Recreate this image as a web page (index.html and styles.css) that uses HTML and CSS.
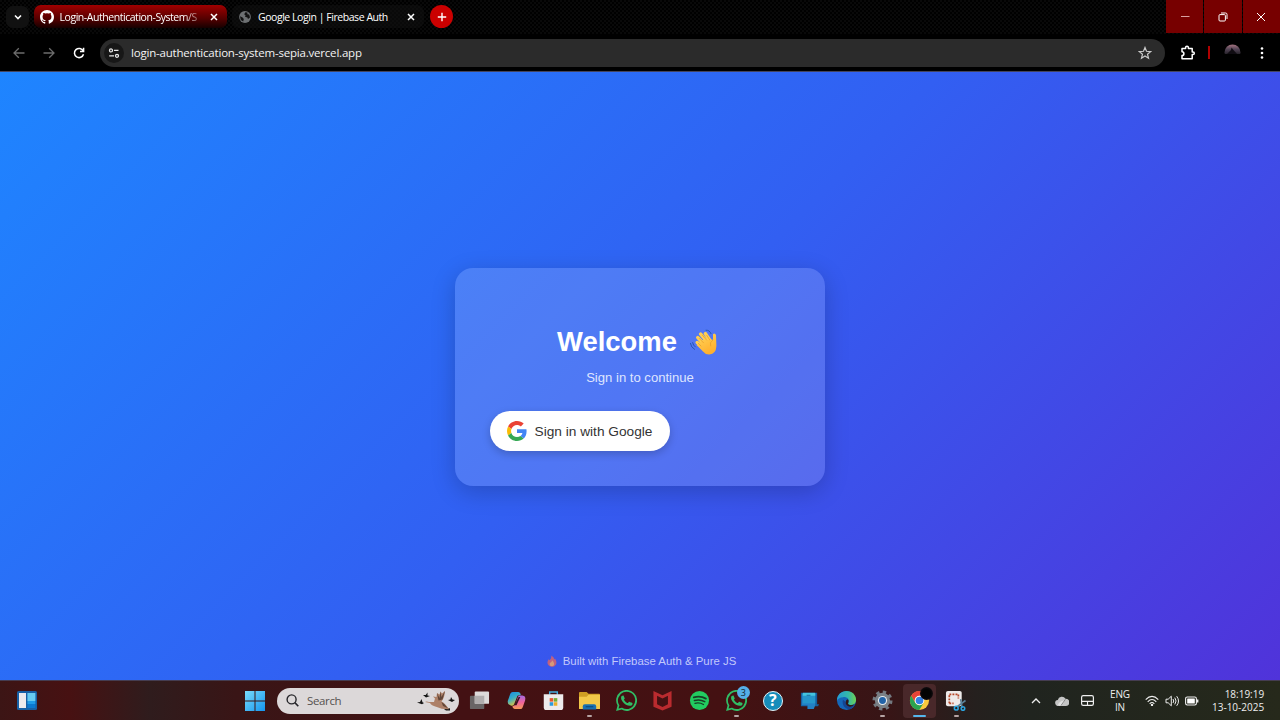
FILE: index.html
```html
<!DOCTYPE html>
<html lang="en">
<head>
<meta charset="utf-8">
<title>Google Login | Firebase Auth</title>
<link rel="stylesheet" href="styles.css">
</head>
<body>
<div class="desktop">
  <header class="tabstrip">
    <button class="tab-search" aria-label="Search tabs"><svg width="10" height="10" viewBox="0 0 10 10"><path d="M2 3.5 5 6.5 8 3.5" fill="none" stroke="#fff" stroke-width="1.6"/></svg></button>
    <div class="tab tab-red">
      <svg class="tab-icon" width="14" height="14" viewBox="0 0 16 16"><path fill="#fff" d="M8 0C3.58 0 0 3.58 0 8c0 3.54 2.29 6.53 5.47 7.59.4.07.55-.17.55-.38 0-.19-.01-.82-.01-1.49-2.01.37-2.53-.49-2.69-.94-.09-.23-.48-.94-.82-1.13-.28-.15-.68-.52-.01-.53.63-.01 1.08.58 1.23.82.72 1.21 1.87.87 2.33.66.07-.52.28-.87.51-1.07-1.78-.2-3.64-.89-3.64-3.95 0-.87.31-1.59.82-2.15-.08-.2-.36-1.02.08-2.12 0 0 .67-.21 2.2.82a7.4 7.4 0 0 1 4 0c1.53-1.04 2.2-.82 2.2-.82.44 1.1.16 1.92.08 2.12.51.56.82 1.27.82 2.15 0 3.07-1.87 3.75-3.65 3.95.29.25.54.73.54 1.48 0 1.07-.01 1.93-.01 2.2 0 .21.15.46.55.38A8 8 0 0 0 16 8c0-4.42-3.58-8-8-8z"/></svg>
      <span class="tab-title fade">Login-Authentication-System/S</span>
      <svg class="tab-close" width="8" height="8" viewBox="0 0 8 8"><path d="M1 1 7 7M7 1 1 7" stroke="#fff" stroke-width="1.5"/></svg>
    </div>
    <div class="tab tab-dark">
      <svg class="tab-icon" width="12" height="12" viewBox="0 0 12 12"><circle cx="6" cy="6" r="5.9" fill="#6d7072"/><path d="M1 5.2 3.6 6.6 4.8 8 4.2 10.4 1.8 9ZM6.4 1.2 5.2 3.2 6.6 4.4 6 5.8 8.4 6.4 9 8 11 6.6 10.2 3.4 8.4 3.2 8.4 1.6Z" fill="#111"/></svg>
      <span class="tab-title">Google Login | Firebase Auth</span>
      <svg class="tab-close" width="8" height="8" viewBox="0 0 8 8"><path d="M1 1 7 7M7 1 1 7" stroke="#fff" stroke-width="1.5"/></svg>
    </div>
    <button class="new-tab" aria-label="New tab"><svg width="10" height="10" viewBox="0 0 10 10"><path d="M5 .8V9.2M.8 5H9.2" stroke="#fff" stroke-width="1.4"/></svg></button>
    <div class="window-buttons">
      <span class="wb"><svg width="10" height="10" viewBox="0 0 10 10"><path d="M1 4.5H9.5" stroke="#d9a0a0" stroke-width="1"/></svg></span>
      <span class="wb"><svg width="10" height="10" viewBox="0 0 10 10"><rect x="1" y="2.6" width="6.4" height="6.4" rx="1" fill="none" stroke="#fff"/><path d="M3 1H7.6Q9 1 9 2.4V7" fill="none" stroke="#fff"/></svg></span>
      <span class="wb"><svg width="10" height="10" viewBox="0 0 10 10"><path d="M1 1 9 9M9 1 1 9" stroke="#fff" stroke-width="1"/></svg></span>
    </div>
  </header>
  <div class="toolbar">
    <svg class="nav" width="12" height="12" viewBox="0 0 12 12"><path d="M11.5 6H1M5.8 1.2 1 6 5.8 10.8" fill="none" stroke="#6c6c6c" stroke-width="1.3"/></svg>
    <svg class="nav" width="12" height="12" viewBox="0 0 12 12"><path d="M.5 6H11M6.2 1.2 11 6 6.2 10.8" fill="none" stroke="#6c6c6c" stroke-width="1.3"/></svg>
    <svg class="nav" width="12" height="12" viewBox="0 0 12 12"><path d="M10.2 4A4.6 4.6 0 1 0 10.5 7.2M10.6 .8V4.4H7" fill="none" stroke="#fff" stroke-width="1.5"/></svg>
    <div class="omnibox">
      <span class="site-info"><svg width="12" height="12" viewBox="0 0 12 12"><g fill="none" stroke="#e8e8e8" stroke-width="1.3"><circle cx="3" cy="3.4" r="1.5"/><path d="M6 3.4H10.5M1.2 8.8H6"/><circle cx="9" cy="8.8" r="1.5"/></g></svg></span>
      <span class="url">login-authentication-system-sepia.vercel.app</span>
      <svg class="star" width="14" height="14" viewBox="0 0 14 14"><path d="M7 1.5 8.5 5.3 12.6 5.6 9.5 8.2 10.5 12.2 7 10 3.5 12.2 4.5 8.2 1.4 5.6 5.5 5.3Z" fill="none" stroke="#c9c9c9" stroke-width="1.2"/></svg>
    </div>
    <svg class="ext" width="16" height="16" viewBox="0 0 16 16"><path d="M2 3.4H5.6V2.6A1.4 1.4 0 0 1 8.4 2.6V3.4H12.2V7H13A1.3 1.3 0 0 1 13 9.6H12.2V13.8H2V10.6A1.9 1.9 0 0 0 2 6.8Z" fill="none" stroke="#fff" stroke-width="1.5" stroke-linejoin="round"/></svg>
    <span class="divider"></span>
    <svg class="profile" width="17" height="17" viewBox="0 0 17 17"><defs><linearGradient id="pf" x2="0" y2="1"><stop offset="0" stop-color="#a57480"/><stop offset=".3" stop-color="#514354"/><stop offset=".58" stop-color="#29242c"/><stop offset=".62" stop-color="#000"/></linearGradient></defs><circle cx="8.5" cy="8.5" r="8" fill="url(#pf)"/><path d="M3 10 7 6 7.6 3.6 9 5.4 13 10Z" fill="#100c12"/></svg>
    <svg class="dots" width="4" height="14" viewBox="0 0 4 14"><g fill="#fff"><circle cx="2" cy="2.5" r="1.3"/><circle cx="2" cy="7" r="1.3"/><circle cx="2" cy="11.5" r="1.3"/></g></svg>
  </div>

  <main class="page">
    <section class="card">
      <h1 class="title">Welcome
        <svg class="wave" width="28" height="28" viewBox="0 0 28 28"><defs><linearGradient id="hand" x2=".5" y2="1"><stop offset="0" stop-color="#ffd75c"/><stop offset="1" stop-color="#ffb02e"/></linearGradient></defs><g fill="none" stroke="#2458b4" stroke-width="1" stroke-linecap="round"><path d="M1.4 15.4Q2 19.6 5.6 21.4M3.6 14.6Q4 17.4 6.4 19M17 2.2Q20.5 1.8 22 5.6"/></g><g stroke-width="3.5" stroke-linecap="round" stroke="#ffcf51"><path d="M8.2 14.5 15 20.5M8.8 9.6 16 17M11.6 6 19 15M16.4 5.6 22 14"/></g><path d="M9 16 14 12 21 11.5 24 11.7Q24 8.6 24 6.2 25.8 4.4 27 7L27.4 18Q27 26 20.4 26.4 16.4 26.6 14 23.4L7.6 17Z" fill="url(#hand)"/><path d="M10.2 10.4 14.5 14.8M13.4 7.2 17.5 12M17.8 7.4 20.8 12M9.2 15.2 12 18M23.8 12Q20 14.6 21.6 18" fill="none" stroke="#e59a2a" stroke-width=".7" stroke-linecap="round"/></svg>
      </h1>
      <p class="sub">Sign in to continue</p>
      <button class="google"><svg width="20" height="20" viewBox="0 0 48 48"><path fill="#EA4335" d="M24 9.5c3.54 0 6.71 1.22 9.21 3.6l6.85-6.85C35.9 2.38 30.47 0 24 0 14.62 0 6.51 5.38 2.56 13.22l7.98 6.19C12.43 13.72 17.74 9.5 24 9.5z"/><path fill="#4285F4" d="M46.98 24.55c0-1.57-.15-3.09-.38-4.55H24v9.02h12.94c-.58 2.96-2.26 5.48-4.78 7.18l7.73 6c4.51-4.18 7.09-10.36 7.09-17.65z"/><path fill="#FBBC05" d="M10.53 28.59c-.48-1.45-.76-2.99-.76-4.59s.27-3.14.76-4.59l-7.98-6.19C.92 16.46 0 20.12 0 24c0 3.88.92 7.54 2.56 10.78l7.97-6.19z"/><path fill="#34A853" d="M24 48c6.48 0 11.93-2.13 15.89-5.81l-7.73-6c-2.15 1.45-4.92 2.3-8.16 2.3-6.26 0-11.57-4.22-13.47-9.91l-7.98 6.19C6.51 42.62 14.62 48 24 48z"/></svg><span>Sign in with Google</span></button>
    </section>
    <footer class="credit"><svg width="10" height="12" viewBox="0 0 10 12"><path d="M4.2.6Q7.2 2 7.3 4.4L8.1 3.5Q10.6 8 8.4 10.3 7 12 4.8 11.8 1.4 11.6.6 8.6 0 6.4 1.7 4.2L2.7 5.2Q4.8 3.2 4.2.6Z" fill="#c0617f"/><path d="M5 5.2Q8 8 6.9 10.3 5 12 3 10.4 2 8.4 3.6 7.6 5 6.8 5 5.2Z" fill="#d69a79"/></svg><span>Built with Firebase Auth &amp; Pure JS</span></footer>
  </main>

  <nav class="taskbar">
    <svg class="widgets" width="20" height="20" viewBox="0 0 20 20"><rect width="20" height="19" rx="1.5" fill="#1760a5"/><rect x="2" y="2" width="7" height="15" fill="#eceaed"/><rect x="10.4" y="2" width="8" height="8" fill="#66cbf1"/><rect x="10.4" y="10" width="8" height="3" fill="#1e9ae8"/><rect x="10.4" y="13" width="8" height="4" fill="#0b78d0"/></svg>
    <svg class="start" width="20" height="20" viewBox="0 0 20 20"><defs><linearGradient id="win" x2="1" y2="1"><stop offset="0" stop-color="#79dbfb"/><stop offset="1" stop-color="#1495ee"/></linearGradient></defs><path d="M0 0H9.5V9.5H0ZM10.5 0H20V9.5H10.5ZM0 10.5H9.5V20H0ZM10.5 10.5H20V20H10.5Z" fill="url(#win)"/></svg>
    <div class="search">
      <svg width="13" height="13" viewBox="0 0 13 13"><circle cx="5.6" cy="5.4" r="4.5" fill="none" stroke="#26262a" stroke-width="1.4"/><path d="M8.8 8.6 12.3 12.2" stroke="#26262a" stroke-width="1.6"/></svg>
      <span>Search</span>
      <svg class="birds" width="40" height="22" viewBox="0 0 40 22"><g fill="#151515"><path d="M1 12.5 4 12 5.5 9 6.5 12.3 8 13 6 14.3Z"/><path d="M7 5 9.7 5.1 11.5 2.5 11.5 5.4 14 6 10 7.4Z"/><path d="M32 10 34.4 9.6 35 7 36.5 9.6 39 10 36 12Z"/><path d="M28 19 34 18.3 34 20.4 30 20.6Z"/></g><path d="M9 12Q10.5 10.8 13 12L18 12 19 8.5 17 6.4 20.5 7 21 3 23.5 4.6 24.5 1.5 26 3.5 29 1Q28.6 8 25.5 11.4 29 13 33 19.2 26 19.4 20 16.7 15.4 15.5 14 13Z" fill="#ad8068"/><path d="M21 3 23.5 8 24.5 1.5 25.4 7 29 1 26.5 9.5 22.5 10.5ZM25.5 12Q28.6 13.6 32 18.3L27 16Z" fill="#614638"/></svg>
    </div>
    <div class="apps">
      <span class="app"><svg viewBox="0 0 22 22"><rect x="1" y="6" width="15" height="14" rx="1" fill="#696566"/><rect x="6" y="1.5" width="15" height="13" rx="1" fill="#dddada"/><path d="M6 6H16V14.5H6Z" fill="#b0adae"/></svg></span>
      <span class="app"><svg viewBox="0 0 22 22"><defs><linearGradient id="c1" x2=".5" y2="1"><stop offset="0" stop-color="#1686e5"/><stop offset=".5" stop-color="#37adc6"/><stop offset="1" stop-color="#e7c63a"/></linearGradient><linearGradient id="c2" x2="0" y2="1"><stop offset="0" stop-color="#a46be1"/><stop offset=".5" stop-color="#ef629b"/><stop offset="1" stop-color="#f59b56"/></linearGradient></defs><path d="M7 2H13Q15 2 15.6 5L12 6 8.5 15Q7.8 17 5 16.2 1 15 2 11L4.5 4Q5.2 2 7 2Z" fill="url(#c1)"/><path d="M14 5.8H17Q21.2 6 20 11L17.5 18Q16.8 20 15 20H9Q7 20 6.7 17 9 17 10 14.4L12.4 7.5Q13 5.9 14 5.8Z" fill="url(#c2)"/><path d="M13.2 7.3H15L11 16H8.6Z" fill="#3a1420"/></svg></span>
      <span class="app"><svg viewBox="0 0 22 22"><path d="M7 5V2H15V5" fill="none" stroke="#46aee0" stroke-width="1.5"/><path d="M.8 4.5H21.2V18Q21.2 21 18.5 21H3.5Q.8 21 .8 18Z" fill="#edebec"/><rect x="7" y="8.5" width="3.7" height="3.7" fill="#e65730"/><rect x="11.3" y="8.5" width="3.7" height="3.7" fill="#74ad35"/><rect x="7" y="12.8" width="3.7" height="3.7" fill="#2b9bdc"/><rect x="11.3" y="12.8" width="3.7" height="3.7" fill="#eab02b"/></svg></span>
      <span class="app"><svg viewBox="0 0 22 22"><path d="M0 3Q0 2 1 2H8L10 4H21Q22 4 22 5V19Q22 20 21 20H1Q0 20 0 19Z" fill="#cf9e23"/><path d="M0 7 8 7 10 5H22V19Q22 20 21 20H1Q0 20 0 19Z" fill="#f2c849"/><path d="M4 20.5V17Q4 15 6 15H16Q18 15 18 17V20.5Z" fill="#176fb1"/><path d="M7 17.5H15" stroke="#0c4c83" stroke-width="1.4"/></svg><i class="run"></i></span>
      <span class="app"><svg viewBox="0 0 24 24"><path fill="#31bd65" d="M17.47 14.38c-.3-.15-1.76-.87-2.03-.97-.28-.1-.47-.15-.67.15-.2.3-.77.97-.94 1.16-.17.2-.35.23-.65.08-.3-.15-1.25-.46-2.39-1.48a9 9 0 0 1-1.65-2.06c-.17-.3 0-.46.13-.61.6-.6.9-.9.5-1.5L8.85 6.9c-.24-.58-.49-.5-.67-.51-1.2 0-2.4.8-2.4 2.73 0 1.76 1.28 3.46 1.46 3.7 3 4.8 8.8 6.2 10.9 4.5.7-.6.9-1.6.7-2.3-.1-.2-.8-.4-1.37-.64zM12.05 21.8a9.87 9.87 0 0 1-5.03-1.38l-.36-.21-3.74.98 1-3.65-.24-.37A9.89 9.89 0 1 1 12.05 21.8zM20.52 3.45A11.9 11.9 0 0 0 1.8 17.84L.1 24l6.31-1.65A11.9 11.9 0 0 0 20.52 3.45z"/></svg></span>
      <span class="app"><svg viewBox="0 0 22 22"><path d="M1.5 1 11 5.5 20.5 1V17.5L11 21.5 1.5 17.5ZM5.3 6V15L11 17.7 16.7 15V6L11 8.8Z" fill="#ba2b2f" fill-rule="evenodd"/></svg></span>
      <span class="app"><svg viewBox="0 0 22 22"><circle cx="11" cy="11" r="10" fill="#22cc60"/><g fill="none" stroke="#183f25" stroke-linecap="round"><path d="M5 7.8Q11.8 5.8 17.7 9" stroke-width="1.9"/><path d="M5.7 11Q11.5 9.3 16.5 12.2" stroke-width="1.6"/><path d="M6.2 14Q11 12.8 15.2 15.2" stroke-width="1.3"/></g></svg></span>
      <span class="app"><svg viewBox="0 0 24 24"><path fill="#31bd65" d="M17.47 14.38c-.3-.15-1.76-.87-2.03-.97-.28-.1-.47-.15-.67.15-.2.3-.77.97-.94 1.16-.17.2-.35.23-.65.08-.3-.15-1.25-.46-2.39-1.48a9 9 0 0 1-1.65-2.06c-.17-.3 0-.46.13-.61.6-.6.9-.9.5-1.5L8.85 6.9c-.24-.58-.49-.5-.67-.51-1.2 0-2.4.8-2.4 2.73 0 1.76 1.28 3.46 1.46 3.7 3 4.8 8.8 6.2 10.9 4.5.7-.6.9-1.6.7-2.3-.1-.2-.8-.4-1.37-.64zM12.05 21.8a9.87 9.87 0 0 1-5.03-1.38l-.36-.21-3.74.98 1-3.65-.24-.37A9.89 9.89 0 1 1 12.05 21.8zM20.52 3.45A11.9 11.9 0 0 0 1.8 17.84L.1 24l6.31-1.65A11.9 11.9 0 0 0 20.52 3.45z"/></svg><b class="badge">3</b><i class="run"></i></span>
      <span class="app"><span class="help">?</span></span>
      <span class="app"><svg viewBox="0 0 22 22"><path d="M2 3H19V15H21L20 17H15V20H9V17H2Z" fill="#155f9f"/><path d="M3 4H17V16L15.5 20H9V16H3Z" fill="#2380c5"/><rect x="4" y="3" width="13" height="11" fill="#2596cb"/><path d="M4 3H17V6H4Z" fill="#44c4de"/><path d="M8 5.5H12" stroke="#176a9c"/></svg></span>
      <span class="app"><svg viewBox="0 0 22 22"><defs><linearGradient id="e1" x2="1" y2="0"><stop offset="0" stop-color="#259cd5"/><stop offset=".6" stop-color="#35b9a6"/><stop offset="1" stop-color="#70d251"/></linearGradient></defs><circle cx="11" cy="11" r="10" fill="#1566b8"/><path d="M1 11C1 4.8 5.8 1 11 1 17 1 21 5.2 21 10.2 21 14 18.3 15.8 15.6 15.8 13 15.8 12 14.4 13 13 14.6 9.5 11 7 7.4 7.5 4 7.7 1.6 9.3 1 11Z" fill="url(#e1)"/><path d="M7.3 10.2C5.7 15.6 9.6 20.4 14.8 20.2 17 19.3 18.8 17.8 19.8 15.8 14 18.6 9.7 15.5 9.7 12Z" fill="#154592"/><path d="M13 13Q12 14.4 13.2 15.2 16.4 16.5 19.8 15 17 18 13.7 17.3 9.8 16 10.1 12.5 10.5 10.2 12.4 9.8 13.8 11.3 13 13Z" fill="#301819"/></svg></span>
      <span class="app"><svg viewBox="0 0 22 22"><circle cx="11" cy="11" r="8.5" fill="none" stroke="#737980" stroke-width="4" stroke-dasharray="3.35 3.33"/><circle cx="11" cy="11" r="8" fill="#7b8187"/><circle cx="11" cy="11" r="4.8" fill="#e7edf2"/><circle cx="11" cy="11" r="3.6" fill="#2163a8"/></svg><i class="run"></i></span>
      <span class="app active"><svg viewBox="0 0 22 22"><circle cx="11" cy="11" r="10" fill="#fbc83c"/><path d="M2.3 6A10 10 0 0 1 19.7 6H11A5 5 0 0 0 6.7 13.5Z" fill="#e64338"/><path d="M2.3 6A10 10 0 0 0 10.8 21L15.3 13.5A5 5 0 0 1 6.7 13.5Z" fill="#2ba451"/><circle cx="11" cy="11" r="5" fill="#fff"/><circle cx="11" cy="11" r="4" fill="#3480e3"/></svg><b class="avatar"></b><i class="run run-active"></i></span>
      <span class="app"><svg viewBox="0 0 22 22"><rect x="1" y="1" width="16.5" height="16" rx="2" fill="#eeeaea"/><path d="M4.5 14V4.5H14V9M4.5 14H9" fill="none" stroke="#b8482a" stroke-width="1.8" stroke-dasharray="2 1.2"/><path d="M21.5 11 12.4 17.6M16.4 9.5 18 19" stroke="#5b8298" stroke-width="1.7"/><circle cx="11.8" cy="19" r="2" fill="none" stroke="#2ba4df" stroke-width="1.6"/><circle cx="18.8" cy="19.4" r="1.9" fill="none" stroke="#2ba4df" stroke-width="1.6"/></svg><i class="run"></i></span>
    </div>
    <div class="tray">
      <svg class="chev" width="10" height="8" viewBox="0 0 10 8"><path d="M1 6 5 2 9 6" fill="none" stroke="#eee" stroke-width="1.3"/></svg>
      <svg class="cloud" width="14" height="10" viewBox="0 0 14 10"><path d="M3.5 10A3 3 0 0 1 2.8 4 4.2 4.2 0 0 1 10.5 2.8 3.6 3.6 0 0 1 11 10Z" fill="#c5c5c5"/><path d="M3 9Q4 5 9 4.5 9 8 5 10Z" fill="#e3e3e3"/><path d="M6 9.5 10.4 3.3" stroke="#888" stroke-width="1"/></svg>
      <svg class="pad" width="13" height="11" viewBox="0 0 13 11"><rect x=".6" y=".6" width="11.8" height="9.8" rx="1.6" fill="none" stroke="#eee" stroke-width="1.2"/><path d="M.6 6.4H12.4M6.5 6.4V10.4" stroke="#eee" stroke-width="1.1"/></svg>
      <div class="lang"><span>ENG</span><span>IN</span></div>
      <svg class="wifi" width="14" height="12" viewBox="0 0 14 12"><g fill="none" stroke="#eee" stroke-width="1.1"><path d="M.7 4.6Q7-1.8 13.3 4.6M2.7 6.8Q7 2.2 11.3 6.8M4.7 8.8Q7 6.2 9.3 8.8"/></g><circle cx="7" cy="9.9" r="1.2" fill="#eee"/></svg>
      <svg class="sound" width="15" height="12" viewBox="0 0 15 12"><path d="M1 4.2H3.2L6.3 1.2V10.8L3.2 7.8H1Z" fill="none" stroke="#eee"/><path d="M8 4Q9.5 6 8 8M9.8 2.6Q12.3 6 9.8 9.4M11.7 1.2Q15.3 6 11.7 10.8" fill="none" stroke="#eee"/></svg>
      <svg class="battery" width="14" height="10" viewBox="0 0 14 10"><rect x=".6" y="1" width="10.8" height="8" rx="1.7" fill="none" stroke="#eee" stroke-width="1.1"/><rect x="2.2" y="2.6" width="7.6" height="4.8" rx=".5" fill="#fff"/><path d="M12.6 3.5V6.5" stroke="#eee" stroke-width="1.6"/></svg>
      <div class="clock"><span>18:19:19</span><span>13-10-2025</span></div>
    </div>
  </nav>
</div>
</body>
</html>
```
FILE: styles.css
```css
* { box-sizing: border-box; }
body { margin: 0; font-family: "Open Sans", "Noto Sans", sans-serif; }
button { border: 0; padding: 0; font: inherit; }
svg { display: block; flex: none; }
.desktop { width: 1280px; height: 720px; display: grid; grid-template-columns: 1280px; grid-template-rows: 34px 38px 608px 40px; overflow: hidden; }

.tabstrip { display: flex; align-items: center; padding-left: 6px; padding-bottom: 1px; background: repeating-conic-gradient(#000 0 25%, #090909 0 50%) 0 0 / 4px 4px; }
.tab-search { width: 23px; height: 22px; border-radius: 7px; background: #111; display: grid; place-items: center; }
.tab { display: flex; align-items: center; height: 23px; border-radius: 7px; color: #fff; font-size: 10.5px; }
.tab-red { width: 193px; margin-left: 4.5px; padding: 0 9px 0 6px; background: linear-gradient(#a00000, #540000 60%, #160000); }
.tab-dark { width: 192px; margin-left: 5.5px; padding: 0 9px 0 7px; background: rgba(18, 18, 18, .5); }
.tab-title { flex: 1; margin: 0 10px 0 6px; white-space: nowrap; letter-spacing: -.45px; }
.tab-dark .tab-title { margin-left: 7px; }
.fade { -webkit-mask-image: linear-gradient(90deg, #000 88%, transparent 104%); mask-image: linear-gradient(90deg, #000 88%, transparent 104%); }
.new-tab { width: 23px; height: 23px; margin-left: 6px; border-radius: 50%; background: #cb0000; display: grid; place-items: center; }
.window-buttons { display: flex; gap: 1px; margin-left: auto; align-self: stretch; }
.wb { width: 37.4px; height: 33px; background: #770000; display: grid; place-items: center; }

.toolbar { display: flex; align-items: center; padding: 0 16px 0 13px; background: #000; border-bottom: 1px solid #44455e; }
.nav { margin-right: 18px; }
.nav:nth-child(3) { margin-right: 15px; }
.omnibox { flex: none; width: 1065px; height: 28px; border-radius: 14px; background: #2b2b2b; display: flex; align-items: center; padding: 0 13px 0 4px; color: #f3f3f3; }
.site-info { width: 20px; height: 20px; border-radius: 50%; background: #171717; display: grid; place-items: center; }
.url { flex: 1; margin-left: 7px; font-size: 11.5px; letter-spacing: -.2px; }
.ext { margin-left: 15px; }
.divider { flex: none; width: 2px; height: 13px; margin-left: 12px; background: #b00000; }
.profile { margin-left: 14px; }
.dots { margin-left: 19px; }

.page { display: grid; grid-template-rows: 196px auto 1fr; justify-items: center; background: linear-gradient(135deg, #1e85ff, #325ff2 50%, #5033da); font-family: "Liberation Sans", Arial, sans-serif; }
.card { grid-row: 2; width: 370px; height: 218px; padding: 57px 34.5px 34px; border-radius: 18px; background: rgba(255, 255, 255, .15); box-shadow: 0 6px 24px rgba(0, 0, 0, .2); color: #fff; }
.title { display: flex; align-items: center; justify-content: center; gap: 12px; margin: 0; font-size: 27.4px; line-height: 34px; padding-right: 6px; }
.sub { margin: 10px 0 0; font-size: 13.1px; line-height: 18px; text-align: center; color: #dfe5ff; }
.google { display: flex; align-items: center; width: 180px; height: 40px; margin-top: 24px; padding-left: 17px; gap: 8px; border-radius: 20px; background: #fff; color: #333; font-size: 13.7px; white-space: nowrap; box-shadow: 0 3px 8px rgba(0, 0, 0, .2); }
.credit { grid-row: 3; align-self: end; display: flex; align-items: center; gap: 6px; margin-bottom: 12px; padding-left: 3px; font-size: 11.4px; line-height: 14px; color: #c2c8fb; }

.taskbar { display: flex; align-items: center; border-top: 1px solid #453d51; background: linear-gradient(90deg, #3c1515, #471112 70px, #2f1c1d 150px, #391516 235px, #431113 460px, #441112 730px, #371516 890px, #25201e 975px, #20241f 1030px, #26291b); }
.widgets { margin-left: 17px; }
.start { margin-left: 208px; }
.search { display: flex; align-items: center; width: 182px; height: 26px; margin-left: 12px; padding: 0 3px 0 9px; border-radius: 13px; background: #dcd8d9; font-size: 11.5px; color: #55504f; }
.search span { margin-left: 8px; letter-spacing: -.35px; }
.birds { margin-left: auto; }
.apps { display: flex; margin-left: 2.5px; height: 39px; align-items: center; }
.app { width: 36.63px; height: 39px; position: relative; display: grid; place-items: center; flex: none; }
.app svg { width: 21px; height: 21px; position: relative; }
.active::before { content: ""; position: absolute; inset: 3px 2px 2px; background: #49282a; border-radius: 4px; }
.run { position: absolute; bottom: 3px; left: 16px; width: 5px; height: 2px; border-radius: 1px; background: #b6a4a4; }
.run-active { left: 12px; width: 13px; background: #55b7ed; }
.badge { position: absolute; top: 5px; left: 19px; width: 13px; height: 13px; border-radius: 50%; background: #55aee8; color: #10222d; font-size: 9px; line-height: 13px; text-align: center; font-weight: 400; }
.avatar { position: absolute; top: 6px; left: 19px; width: 13px; height: 13px; border-radius: 50%; background: radial-gradient(#030303 45%, #21151c); }
.help { width: 20px; height: 20px; border-radius: 50%; border: 1.5px solid #e4f2f7; background: #168cba; color: #fff; font-size: 16px; font-weight: 700; line-height: 17px; text-align: center; }
.tray { display: flex; align-items: center; margin-left: auto; padding-right: 16px; color: #eee; font-size: 10px; line-height: 13px; }
.cloud { margin-left: 14.5px; }
.pad { margin-left: 12px; }
.lang { display: grid; justify-items: center; width: 22px; margin-left: 15px; letter-spacing: -.2px; }
.wifi { margin-left: 14px; }
.sound { margin-left: 6px; }
.battery { margin-left: 5px; }
.clock { display: grid; justify-items: end; width: 52px; margin-left: 13px; white-space: nowrap; }
```
